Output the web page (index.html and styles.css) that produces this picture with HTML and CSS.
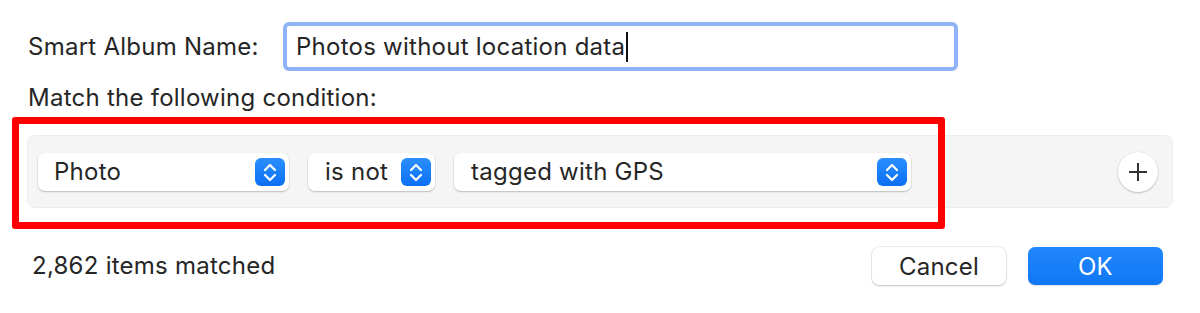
FILE: index.html
```html
<!DOCTYPE html>
<html lang="en">
<head>
<meta charset="utf-8">
<title>Smart Album</title>
<link rel="stylesheet" href="styles.css">
</head>
<body>
<div class="dialog">
  <div class="name-row">
    <label class="name-label">Smart Album Name:</label>
    <div class="name-field"><span class="name-text">Photos without location data</span><span class="caret"></span></div>
  </div>
  <div class="match-label">Match the following condition:</div>
  <div class="rules">
    <div class="popup popup-photo"><span class="popup-text">Photo</span>
      <span class="stepper"><svg viewBox="0 0 30 28" width="30" height="28"><polyline points="10,12 15,7 20,12"/><polyline points="10,17 15,22 20,17"/></svg></span>
    </div>
    <div class="popup popup-op"><span class="popup-text">is not</span>
      <span class="stepper"><svg viewBox="0 0 30 28" width="30" height="28"><polyline points="10,12 15,7 20,12"/><polyline points="10,17 15,22 20,17"/></svg></span>
    </div>
    <div class="popup popup-value"><span class="popup-text">tagged with GPS</span>
      <span class="stepper"><svg viewBox="0 0 30 28" width="30" height="28"><polyline points="10,12 15,7 20,12"/><polyline points="10,17 15,22 20,17"/></svg></span>
    </div>
    <div class="add-btn"><svg viewBox="0 0 20 20" width="20" height="20"><line x1="10" y1="1" x2="10" y2="19"/><line x1="1" y1="10" x2="19" y2="10"/></svg></div>
  </div>
  <div class="footer">
    <div class="count">2,862 items matched</div>
    <div class="buttons">
      <div class="btn btn-cancel">Cancel</div>
      <div class="btn btn-ok">OK</div>
    </div>
  </div>
  <div class="highlight"></div>
</div>
</body>
</html>
```

FILE: styles.css
```css
html, body {
  margin: 0;
  padding: 0;
  background: #ffffff;
}
body {
  font-family: Inter, "Liberation Sans", Arial, sans-serif;
  font-size: 24px;
  letter-spacing: 0.25px;
  color: #262626;
}
.dialog {
  position: relative;
  width: 1200px;
  height: 313px;
  box-sizing: border-box;
  padding: 22px 27px 0 27px;
}
.name-row {
  display: flex;
  align-items: center;
  height: 49px;
}
.name-label {
  width: 256px;
  padding-left: 1px;
  box-sizing: border-box;
  line-height: 28px;
}
.name-field {
  width: 675px;
  height: 49px;
  box-sizing: border-box;
  border: 4.5px solid #8fb3f6;
  border-radius: 6px;
  background: #fff;
  display: flex;
  align-items: center;
  padding-left: 9px;
}
.name-text {
  line-height: 28px;
}
.caret {
  display: inline-block;
  width: 2px;
  height: 30px;
  background: #111;
  margin-left: 1px;
}
.match-label {
  margin-top: 13px;
  padding-left: 1px;
  line-height: 28px;
}
.rules {
  margin-top: 23px;
  height: 73px;
  box-sizing: border-box;
  background: #f5f5f5;
  border: 1px solid #ededed;
  border-radius: 8px;
  display: flex;
  align-items: center;
  padding: 0 14px 0 10px;
}
.popup {
  height: 38px;
  box-sizing: border-box;
  background: #fff;
  border-radius: 7px;
  box-shadow: 0 0.5px 0 0.5px rgba(0,0,0,0.06), 0 1px 2px rgba(0,0,0,0.18);
  display: flex;
  align-items: center;
  justify-content: space-between;
  padding: 0 4px 0 16px;
  margin-right: 19px;
}
.popup-photo { width: 251px; }
.popup-op { width: 127px; padding-left: 17px; }
.popup-value { width: 457px; padding-left: 17px; }
.popup-text {
  line-height: 28px;
}
.stepper {
  width: 30px;
  height: 28px;
  border-radius: 6px;
  background: linear-gradient(#2b8fff, #0b6ff2);
  display: block;
}
.stepper svg {
  display: block;
  fill: none;
  stroke: #fff;
  stroke-width: 2.2;
  stroke-linecap: round;
  stroke-linejoin: round;
}
.add-btn {
  margin-left: auto;
  width: 40px;
  height: 40px;
  border-radius: 50%;
  background: #fff;
  box-shadow: 0 0 0 0.5px rgba(0,0,0,0.08), 0 1px 2px rgba(0,0,0,0.2);
  display: flex;
  align-items: center;
  justify-content: center;
}
.add-btn svg {
  display: block;
  stroke: #333;
  stroke-width: 2;
}
.footer {
  margin-top: 39px;
  display: flex;
  align-items: center;
  justify-content: space-between;
  padding: 0 10px 0 5px;
}
.count {
  line-height: 28px;
}
.buttons {
  display: flex;
  gap: 22px;
}
.btn {
  height: 38px;
  box-sizing: border-box;
  border-radius: 7px;
  display: flex;
  align-items: center;
  justify-content: center;
}
.btn-cancel {
  width: 134px;
  background: #fff;
  box-shadow: 0 0 0 0.5px rgba(0,0,0,0.12), 0 1px 2px rgba(0,0,0,0.2);
}
.btn-ok {
  width: 135px;
  color: #fff;
  background: linear-gradient(#2287fd, #1077f5);
  box-shadow: 0 1px 1px rgba(0,0,0,0.12);
}
.highlight {
  position: absolute;
  left: 12px;
  top: 117px;
  width: 933px;
  height: 112px;
  box-sizing: border-box;
  border: 7px solid #ff0000;
  border-radius: 3px;
  pointer-events: none;
}
```
